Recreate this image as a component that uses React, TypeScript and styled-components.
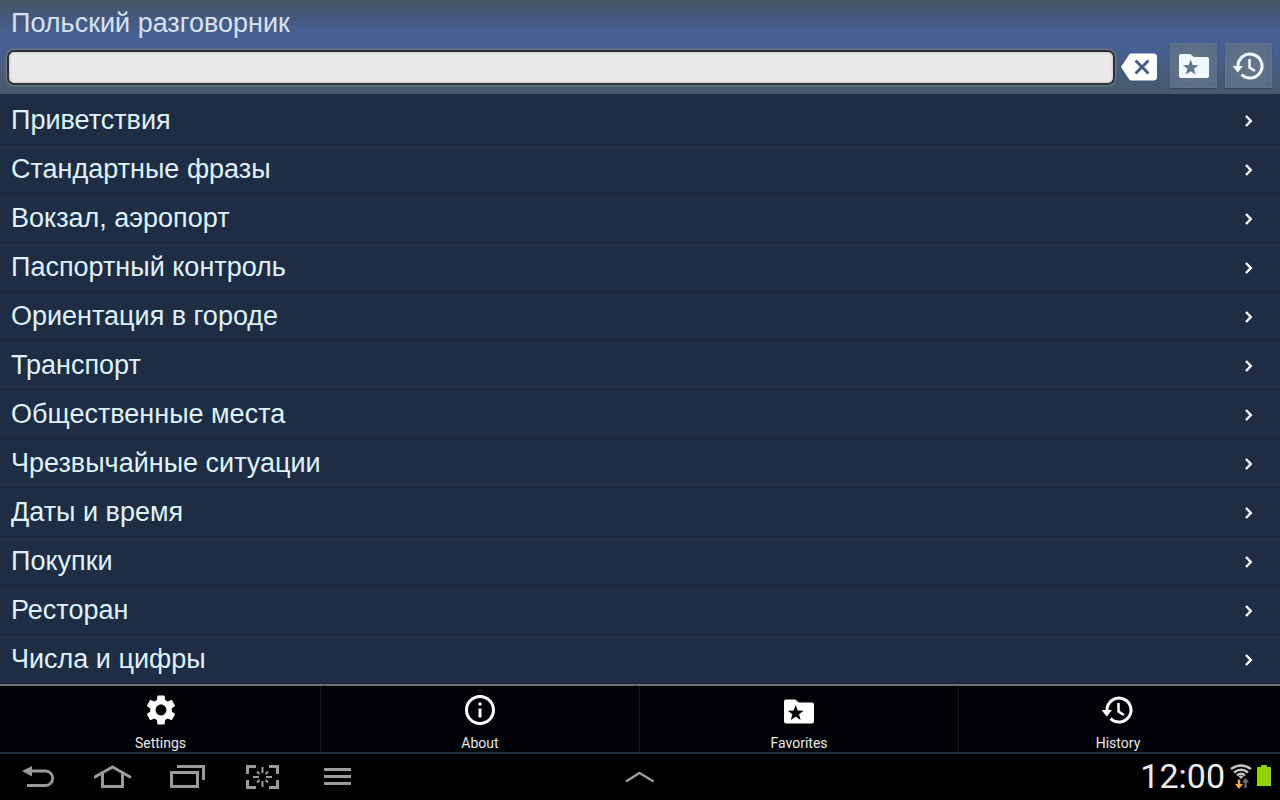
import React from "react";
import styled, { createGlobalStyle } from "styled-components";
import {
  MdBackspace,
  MdInfoOutline,
  MdSettings,
} from "react-icons/md";

const GlobalStyle = createGlobalStyle`
  *, *::before, *::after { box-sizing: border-box; }
  body {
    margin: 0;
    background: #000;
    font-family: "Liberation Sans", Arial, sans-serif;
  }
  button { font: inherit; border: 0; padding: 0; background: none; color: inherit; cursor: pointer; }
  svg { display: block; flex: none; }
`;

const Screen = styled.div`
  min-height: 100vh;
  display: flex;
  flex-direction: column;
`;

const Header = styled.header`
  padding-bottom: 6px;
  background: linear-gradient(#445762 0, #45597a 16px, #476198 38px, #466092 50px, #455c78 74px, #465a6c 100%);
`;

const Title = styled.h1`
  margin: 0;
  padding: 3px 11px 0;
  font-size: 27px;
  font-weight: 400;
  line-height: 40px;
  color: #d5e2f4;
`;

const SearchBar = styled.form`
  display: flex;
  align-items: center;
  gap: 6px;
  padding: 0 8px 0 7px;
`;

const SearchInput = styled.input`
  flex: 1;
  min-width: 0;
  height: 35px;
  margin-top: 4px;
  padding: 0 10px;
  border: 2px solid #2c3036;
  border-radius: 7px;
  background: #e9e9e9;
  box-shadow: 0 0 2px 1px #7c7f84, inset 0 0 3px #b7aaa4;
  font: 22px "Liberation Sans", Arial, sans-serif;
  outline: none;
`;

const ClearButton = styled.button`
  margin-top: 3px;
  color: #fff;
`;

const Tools = styled.div`
  display: flex;
  gap: 8px;
  margin-left: 7px;
`;

const ToolButton = styled.button`
  display: grid;
  place-items: center;
  width: 47px;
  height: 45px;
  background: radial-gradient(#68788a, #566a86);
  box-shadow: inset 0 0 2px #7486a0, 0 1px 1px #36465c;
  color: #f2f8ff;
`;

const List = styled.ul`
  flex: 1;
  margin: 0;
  padding: 2px 0 0;
  list-style: none;
  background: #1e2d43;
`;

const Row = styled.li`
  border-bottom: 1px solid #1a2431;
`;

const RowButton = styled.button`
  display: flex;
  align-items: center;
  justify-content: space-between;
  width: 100%;
  height: 48px;
  padding: 0 19px 0 11px;
  font-size: 27px;
  line-height: 30px;
  text-align: left;
  color: #dff2ff;

  svg { color: #fff; }
`;

const Menu = styled.nav`
  display: grid;
  grid-template-columns: repeat(4, 1fr);
  padding: 0 3px 0 1px;
  border-top: 2px solid #696f79;
  border-bottom: 2px solid #1b303c;
  background: #020306;
`;

const MenuButton = styled.button`
  display: flex;
  flex-direction: column;
  align-items: center;
  height: 66px;
  padding-top: 6px;
  font-family: Roboto, sans-serif;
  font-size: 14px;
  line-height: 16px;
  gap: 7px;
  color: #e8e8e8;

  & + & { border-left: 1px solid #16191c; }
  svg { color: #fff; }
`;

const SystemBar = styled.footer`
  display: grid;
  grid-template-columns: 1fr auto 1fr;
  align-items: center;
  height: 46px;
  background: #000;
  color: #9b9b9b;
`;

const SystemKeys = styled.div`
  display: flex;
  gap: 35px;
  padding-left: 19px;
`;

const SystemKey = styled.button`
  display: block;
`;

const Status = styled.div`
  display: flex;
  align-items: center;
  justify-content: flex-end;
  gap: 5px;
  padding-right: 9px;
`;

const Clock = styled.time`
  padding-bottom: 2px;
  font-family: Roboto, sans-serif;
  font-size: 34px;
  line-height: 40px;
  color: #ebebeb;
`;

const FolderStar = ({ top = 4 }: { top?: number }) => (
  <svg width="36" height="36" viewBox={`0 ${4 - top} 24 24`} fill="currentColor" aria-hidden="true">
    <path
      fillRule="evenodd"
      d="M9.500 4H3.300C2.600 4 2 4.600 2 5.300v13.400c0 .7.6 1.300 1.300 1.300h17.400c.7 0 1.300-.6 1.300-1.300V7.300c0-.7-.6-1.300-1.300-1.300H12zM9.800 7.600l1.350 3.700 3.950.150-3.100 2.450 1.080 3.800-3.280-2.200-3.280 2.200 1.080-3.800-3.100-2.450 3.950-.150z"
    />
  </svg>
);

const HistoryIcon = () => (
  <svg width="36" height="36" viewBox="0 0 36 36" fill="none" stroke="currentColor" aria-hidden="true">
    <path d="M7 20V18a12 12 0 1 1 3.500 8.500" strokeWidth="3" />
    <path d="M18.500 11v8.500l5.500 3.500" strokeWidth="2.500" />
    <path d="M1.500 18h10.500l-5.200 6.500z" fill="currentColor" stroke="none" />
  </svg>
);

const ChevronIcon = () => (
  <svg width="24" height="24" viewBox="0 0 24 24" aria-hidden="true">
    <path d="M9 8l4.800 5L9 18" fill="none" stroke="currentColor" strokeWidth="2.400" />
  </svg>
);

const BackIcon = () => (
  <svg width="40" height="30" viewBox="0 0 40 30" aria-hidden="true">
    <path d="M11 9H26.500a7.200 7.200 0 0 1 0 14.500H8" fill="none" stroke="currentColor" strokeWidth="2.800" />
    <path d="M3 9L13 4v10.500z" fill="currentColor" />
  </svg>
);

const HomeIcon = () => (
  <svg width="40" height="30" viewBox="0 0 40 30" aria-hidden="true">
    <path d="M0 15.500L18.500 5 37 15.500M8.500 11.500v13h20v-13" fill="none" stroke="currentColor" strokeWidth="3" />
  </svg>
);

const RecentIcon = () => (
  <svg width="40" height="30" viewBox="0 0 40 30" aria-hidden="true">
    <path d="M2.500 10.500h26v14h-26zM8 4.500h26.500V18" fill="none" stroke="currentColor" strokeWidth="3" />
  </svg>
);

const CaptureIcon = () => (
  <svg width="40" height="30" viewBox="0 0 40 30" fill="none" stroke="currentColor" aria-hidden="true">
    <path d="M3.500 12V4.500H12M25 4.500h8.500V12M3.500 18v7.500H12M25 25.500h8.500V18" strokeWidth="3" />
    <path d="M18.500 5v6M18.500 19v6M9 15h6M22 15h6M13 9.500l2.500 2.500M24 9.500L21.500 12M13 20.500l2.500-2.500M24 20.500L21.500 18" strokeWidth="2" />
  </svg>
);

const MenuIcon = () => (
  <svg width="40" height="30" viewBox="0 0 40 30" aria-hidden="true">
    <path d="M5 7.500h27M5 14.500h27M5 21.500h27" fill="none" stroke="currentColor" strokeWidth="3" />
  </svg>
);

const ExpandIcon = () => (
  <svg width="30" height="14" viewBox="0 0 30 14" aria-hidden="true">
    <path d="M1 11.500L14.500 3l14 8.500" fill="none" stroke="currentColor" strokeWidth="2.500" />
  </svg>
);

const WifiIcon = () => (
  <svg width="22" height="26" viewBox="0 0 22 26" fill="none" role="img" aria-label="Wi-Fi">
    <path d="M1 5Q11-2 21 5M4 8.500Q11 3 18 8.500M7 11.500Q11 8 15 11.500" stroke="#c4c4c4" strokeWidth="2.500" />
    <path d="M8.500 12.500L11 15l2.500-2.500Q11 10.500 8.500 12.500z" fill="#c4c4c4" />
    <path d="M9 15.500v6" stroke="#f0a437" strokeWidth="2.500" />
    <path d="M5 20h8l-4 5z" fill="#f0a437" />
    <path d="M15.500 24v-7" stroke="#777" strokeWidth="2" />
    <path d="M12 18.500h7L15.500 14z" fill="#777" />
  </svg>
);

const BatteryIcon = () => (
  <svg width="14" height="24" viewBox="0 0 14 24" role="img" aria-label="Battery full">
    <path d="M4 0h6v2h4v19H0V2h4z" fill="#8fd400" />
  </svg>
);

const categories = [
  "Приветствия",
  "Стандартные фразы",
  "Вокзал, аэропорт",
  "Паспортный контроль",
  "Ориентация в городе",
  "Транспорт",
  "Общественные места",
  "Чрезвычайные ситуации",
  "Даты и время",
  "Покупки",
  "Ресторан",
  "Числа и цифры",
];

const menuItems = [
  { label: "Settings", icon: <MdSettings size={36} /> },
  { label: "About", icon: <MdInfoOutline size={36} /> },
  { label: "Favorites", icon: <FolderStar top={5} /> },
  { label: "History", icon: <HistoryIcon /> },
];

const systemKeys = [
  { label: "Back", icon: <BackIcon /> },
  { label: "Home", icon: <HomeIcon /> },
  { label: "Recent apps", icon: <RecentIcon /> },
  { label: "Screen capture", icon: <CaptureIcon /> },
  { label: "Menu", icon: <MenuIcon /> },
];

export default function App() {
  return (
    <Screen>
      <GlobalStyle />
      <Header>
        <Title>Польский разговорник</Title>
        <SearchBar role="search" onSubmit={(event) => event.preventDefault()}>
          <SearchInput type="text" aria-label="Поиск" />
          <ClearButton type="reset" aria-label="Очистить">
            <MdBackspace size={36} />
          </ClearButton>
          <Tools>
            <ToolButton type="button" aria-label="Избранное">
              <FolderStar />
            </ToolButton>
            <ToolButton type="button" aria-label="История">
              <HistoryIcon />
            </ToolButton>
          </Tools>
        </SearchBar>
      </Header>
      <List>
        {categories.map((name) => (
          <Row key={name}>
            <RowButton type="button">
              {name}
              <ChevronIcon />
            </RowButton>
          </Row>
        ))}
      </List>
      <Menu>
        {menuItems.map(({ label, icon }) => (
          <MenuButton type="button" key={label}>
            {icon}
            {label}
          </MenuButton>
        ))}
      </Menu>
      <SystemBar>
        <SystemKeys>
          {systemKeys.map(({ label, icon }) => (
            <SystemKey type="button" key={label} aria-label={label}>
              {icon}
            </SystemKey>
          ))}
        </SystemKeys>
        <SystemKey type="button" aria-label="Expand">
          <ExpandIcon />
        </SystemKey>
        <Status>
          <Clock>12:00</Clock>
          <WifiIcon />
          <BatteryIcon />
        </Status>
      </SystemBar>
    </Screen>
  );
}
